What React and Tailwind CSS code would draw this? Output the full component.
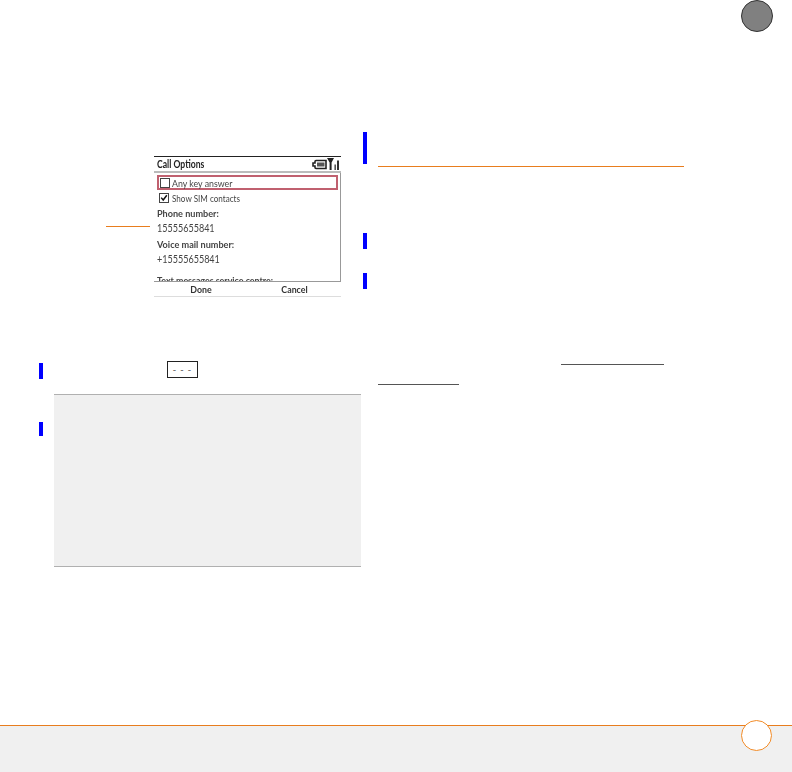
const textFont = "font-['Lato','Liberation_Sans',sans-serif]";

/* ── Phone screen: status bar icons ── */
function StatusIcons() {
  return (
    <svg width="28" height="14" viewBox="0 0 28 14" className="shrink-0">
      <path d="M1 6 L3 6 L3 4.5 Q3 3.5 4 3.5 L14 3.5 L14 11.5 L4 11.5 Q3 11.5 3 10.5 L3 9 L1 9 Z" fill="#fff" stroke="#222" strokeWidth="1.6" />
      <rect x="5" y="5.5" width="7.5" height="4" fill="#555" />
      <path d="M15 1 L22 1 L19.6 5.5 L19.6 13 L17.6 13 L17.6 5.5 Z" fill="#222" />
      <rect x="22.4" y="7.5" width="1.6" height="5.5" fill="#555" />
      <rect x="25" y="3.5" width="2" height="9.5" fill="#333" />
    </svg>
  );
}

function Checkbox({ checked }) {
  return (
    <span className="flex h-[10px] w-[10px] shrink-0 items-center justify-center border border-[#444] bg-white">
      {checked && (
        <svg width="10" height="10" viewBox="0 0 10 10">
          <path d="M1.5 4.5 L4 7.5 L8.5 1.5" fill="none" stroke="#111" strokeWidth="1.8" />
        </svg>
      )}
    </span>
  );
}

/* ── Phone screen ── */
function PhoneScreen() {
  return (
    <div className={`ml-[4px] flex h-[141px] w-[187px] flex-col border-t border-[#222] blur-[0.3px] ${textFont} text-[10px] leading-none text-[#444]`}>
      <div className="flex h-[16px] items-center justify-between border-b-2 border-[#bbb] pl-[3px] pr-[1px]">
        <span className="origin-left scale-x-[0.82] text-[10.5px] font-bold text-[#222]">Call Options</span>
        <StatusIcons />
      </div>
      <div className="flex h-[109px] flex-col overflow-hidden border-b border-r border-[#999] pl-[3px] pr-[2px]">
        <div className="mt-[2px] flex h-[15px] w-[181px] shrink-0 items-center gap-[2px] border-2 border-[#c0606f] pl-[1px]">
          <Checkbox />
          <span className="origin-left scale-x-[0.88]">Any key answer</span>
        </div>
        <div className="flex h-[15px] shrink-0 items-center gap-[3px] pl-[2px]">
          <Checkbox checked />
          <span className="origin-left scale-x-[0.81]">Show SIM contacts</span>
        </div>
        <p className="mt-[3px] origin-left shrink-0 scale-x-[0.91] font-bold">Phone number:</p>
        <p className="mt-[5px] origin-left shrink-0 scale-x-[0.86] text-[10.5px]">15555655841</p>
        <p className="mt-[5px] origin-left shrink-0 scale-x-[0.91] font-bold">Voice mail number:</p>
        <p className="mt-[5px] origin-left shrink-0 scale-x-[0.86] text-[10.5px]">+15555655841</p>
        <p className="mt-[11px] origin-left shrink-0 scale-x-[0.885] font-bold">Text messages service centre:</p>
      </div>
      <div className="flex h-[15px] items-center border-b border-[#ddd] font-bold text-[#333]">
        <span className="w-[94px] scale-x-[0.88] text-center">Done</span>
        <span className="w-[93px] scale-x-[0.88] text-center">Cancel</span>
      </div>
    </div>
  );
}

function Mark({ className }) {
  return <div className={`w-[4px] shrink-0 bg-[#0000ff] ${className}`} />;
}

export default function App() {
  return (
    <div className="relative flex h-[772px] w-[792px] flex-col overflow-hidden bg-white">
      {/* tab badge */}
      <div className="absolute left-[741px] top-0 h-[32px] w-[32px] rounded-full border border-[#333] bg-[#808080]" />

      <div className="flex h-[725px] shrink-0">
        {/* left column */}
        <div className="flex w-[363px] shrink-0 flex-col pt-[156px]">
          <div className="ml-[106px] flex items-start">
            <div className="mt-[70px] h-px w-[44px] bg-[#e87d1e]" />
            <PhoneScreen />
          </div>
          <div className="mt-[64px] flex h-[18px] pl-[39px]">
            <Mark className="mt-[2px] h-[16px]" />
            <div className={`ml-[124px] flex h-[17px] w-[31px] items-center justify-center border border-[#222] ${textFont} text-[9px] font-bold tracking-[1px] text-[#777]`}>
              - - -
            </div>
          </div>
          <div className="mt-[15px] flex pl-[39px]">
            <Mark className="mt-[28px] h-[14px]" />
            <div className="ml-[11px] h-[173px] w-[307px] border-y border-[#b0b0b0] bg-[#f0f0f0]" />
          </div>
        </div>

        {/* right column */}
        <div className="flex flex-1 flex-col pt-[132px]">
          <Mark className="h-[32px]" />
          <div className="ml-[15px] mt-[2px] h-px w-[306px] bg-[#e87d1e]" />
          <Mark className="mt-[66px] h-[16px]" />
          <Mark className="mt-[24px] h-[16px]" />
          <div className="ml-[198px] mt-[75px] h-px w-[103px] bg-[#555]" />
          <div className="ml-[15px] mt-[19px] h-px w-[81px] bg-[#555]" />
        </div>
      </div>

      {/* footer */}
      <div className="h-[47px] border-t border-[#e87d1e] bg-[#f0f0f0]" />
      <div className="absolute left-[741px] top-[720px] h-[31px] w-[31px] rounded-full border border-[#f28c28] bg-white" />
    </div>
  );
}
